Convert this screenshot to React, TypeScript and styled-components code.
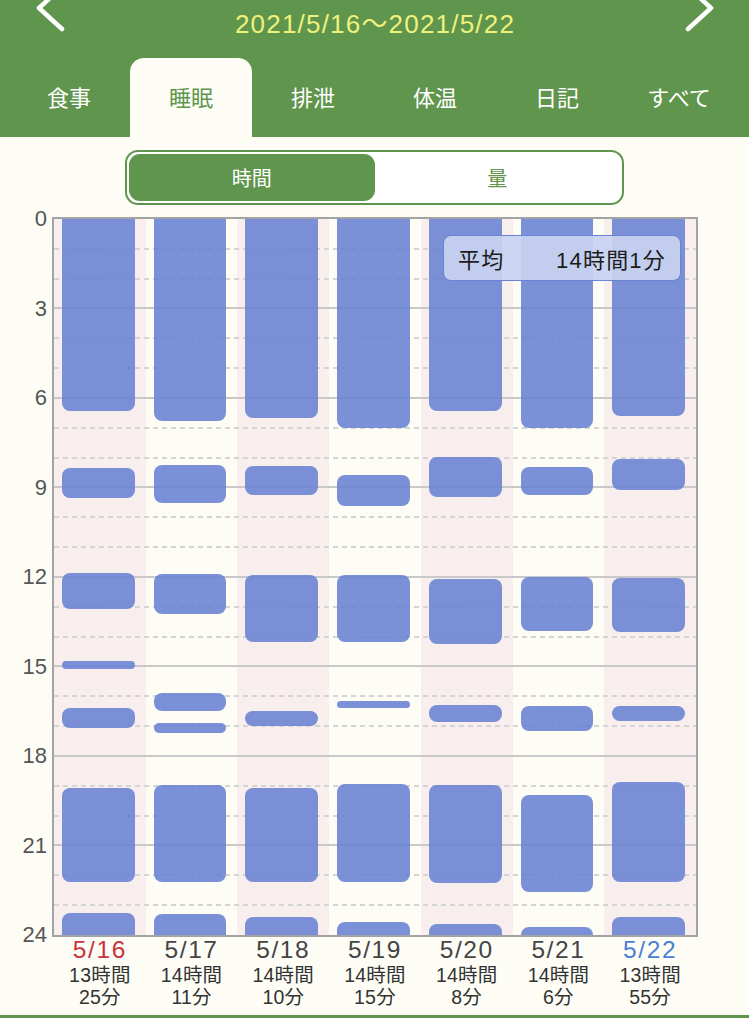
import React from "react";
import styled, { createGlobalStyle } from "styled-components";

const GREEN = "#5f954c";
const PX_PER_HOUR = 716 / 24;
const NUM_FONT = `"Liberation Sans", "Noto Sans CJK JP", sans-serif`;

const GlobalStyle = createGlobalStyle`
  html, body { margin: 0; padding: 0; background: #fdfdf6; }
  body { font-family: "Noto Sans CJK JP", "Noto Sans", sans-serif; }
  * { box-sizing: border-box; }
`;

const Page = styled.div`
  width: 749px;
  display: flex;
  flex-direction: column;
  background: #fdfdf6;
`;

const Header = styled.header`
  background: ${GREEN};
  display: flex;
  flex-direction: column;
`;

const TopRow = styled.div`
  height: 58px;
  display: flex;
  justify-content: space-between;
  align-items: flex-start;
  padding: 0 33px 0 34px;
`;

const DateRange = styled.div`
  font-family: ${NUM_FONT};
  color: #eef27c;
  font-size: 26px;
  line-height: 48px;
  letter-spacing: 1.2px;
`;

const Chevron = styled.svg`
  width: 32px;
  height: 34px;
  display: block;
`;

const Tabs = styled.nav`
  height: 79px;
  display: flex;
  padding-left: 8px;
`;

const Tab = styled.div<{ $active?: boolean }>`
  width: 122px;
  display: flex;
  align-items: center;
  justify-content: center;
  padding-bottom: 3px;
  font-size: 22px;
  color: ${(p) => (p.$active ? GREEN : "#ffffff")};
  background: ${(p) => (p.$active ? "#fdfdf6" : "transparent")};
  border-radius: 14px 14px 0 0;
`;

const SegmentWrap = styled.div`
  display: flex;
  justify-content: center;
  padding-top: 13px;
`;

const Segment = styled.div`
  width: 499px;
  height: 55px;
  border: 2px solid ${GREEN};
  border-radius: 13px;
  padding: 2px;
  background: #ffffff;
  display: flex;
`;

const SegmentItem = styled.div<{ $active?: boolean }>`
  flex: 1;
  display: flex;
  align-items: center;
  justify-content: center;
  font-size: 20px;
  border-radius: 11px;
  color: ${(p) => (p.$active ? "#ffffff" : GREEN)};
  background: ${(p) => (p.$active ? GREEN : "transparent")};
`;

const Chart = styled.div`
  margin-top: 12px;
  display: grid;
  grid-template-columns: 52px 646px;
`;

const Axis = styled.div`
  height: 720px;
  padding: 2px 5px 2px 0;
  display: flex;
  flex-direction: column;
  justify-content: space-between;
  align-items: flex-end;
`;

const AxisLabel = styled.div`
  height: 0;
  display: flex;
  align-items: center;
  font-family: ${NUM_FONT};
  font-size: 22px;
  color: #555555;
`;

const Plot = styled.div`
  position: relative;
  height: 720px;
  border: 2px solid #a3a3a3;
`;

const Columns = styled.div`
  display: grid;
  grid-template-columns: repeat(7, 1fr);
  height: 100%;
`;

const Column = styled.div<{ $shaded?: boolean }>`
  position: relative;
  overflow: hidden;
  background: ${(p) => (p.$shaded ? "#f8eeee" : "transparent")};
`;

const Grid = styled.div`
  position: absolute;
  inset: 0;
  z-index: 1;
  display: flex;
  flex-direction: column;
  pointer-events: none;
`;

const GridRow = styled.div<{ $line: "none" | "solid" | "dashed" }>`
  flex: 1;
  position: relative;
  &::before {
    content: "";
    display: ${(p) => (p.$line === "none" ? "none" : "block")};
    position: absolute;
    left: 0;
    right: 0;
    top: -1px;
    height: 2px;
    background: ${(p) =>
      p.$line === "solid"
        ? "#c9c9c9"
        : "repeating-linear-gradient(to right, #d4d4d4 0 5px, transparent 5px 9px)"};
  }
`;

const Bar = styled.div`
  position: absolute;
  left: 8px;
  right: 11px;
  z-index: 2;
  border-radius: 8px;
  background: rgba(104, 130, 211, 0.88);
`;

const Badge = styled.div`
  position: absolute;
  top: 16px;
  right: 15px;
  z-index: 3;
  width: 238px;
  height: 46px;
  padding: 0 14px 0 14px;
  display: flex;
  align-items: center;
  justify-content: space-between;
  border: 1.5px solid #6a83d6;
  border-radius: 8px;
  background: rgba(200, 211, 241, 0.93);
  font-family: ${NUM_FONT};
  font-size: 22px;
  letter-spacing: 1.2px;
  color: #1c1c1c;
`;

const XLabels = styled.div`
  margin-left: 54px;
  width: 642px;
  display: grid;
  grid-template-columns: repeat(7, 1fr);
`;

const XLabel = styled.div`
  display: flex;
  flex-direction: column;
  align-items: center;
`;

const DayText = styled.div<{ $color: string }>`
  font-family: ${NUM_FONT};
  font-size: 24.5px;
  line-height: 26px;
  letter-spacing: 1.6px;
  color: ${(p) => p.$color};
`;

const DurationBox = styled.div`
  margin-top: 1px;
  display: flex;
  flex-direction: column;
  align-items: center;
`;

const DurationLine = styled.div`
  font-family: ${NUM_FONT};
  font-size: 19.5px;
  line-height: 22px;
  letter-spacing: 0.2px;
  color: #333333;
`;

const FooterLine = styled.div`
  margin-top: 7px;
  height: 3px;
  background: ${GREEN};
`;

type Day = {
  label: string;
  color: string;
  h: string;
  m: string;
  bars: [number, number][];
};

const days: Day[] = [
  {
    label: "5/16", color: "#c9323e", h: "13時間", m: "25分",
    bars: [[0, 6.43], [8.34, 9.34], [11.88, 13.08], [14.82, 15.07], [16.4, 17.07], [19.06, 22.21], [23.27, 24]],
  },
  {
    label: "5/17", color: "#444444", h: "14時間", m: "11分",
    bars: [[0, 6.76], [8.25, 9.51], [11.91, 13.23], [15.9, 16.48], [16.89, 17.23], [18.97, 22.21], [23.3, 24]],
  },
  {
    label: "5/18", color: "#444444", h: "14時間", m: "10分",
    bars: [[0, 6.67], [8.27, 9.25], [11.94, 14.19], [16.48, 16.98], [19.06, 22.21], [23.39, 24]],
  },
  {
    label: "5/19", color: "#444444", h: "14時間", m: "15分",
    bars: [[0, 7.0], [8.59, 9.62], [11.93, 14.19], [16.15, 16.4], [18.94, 22.21], [23.55, 24]],
  },
  {
    label: "5/20", color: "#444444", h: "14時間", m: "8分",
    bars: [[0, 6.43], [7.98, 9.31], [12.08, 14.24], [16.28, 16.87], [18.97, 22.27], [23.63, 24]],
  },
  {
    label: "5/21", color: "#444444", h: "14時間", m: "6分",
    bars: [[0, 7.0], [8.31, 9.25], [11.99, 13.8], [16.31, 17.15], [19.31, 22.55], [23.72, 24]],
  },
  {
    label: "5/22", color: "#4a80d6", h: "13時間", m: "55分",
    bars: [[0, 6.59], [8.04, 9.08], [12.02, 13.85], [16.31, 16.82], [18.86, 22.21], [23.39, 24]],
  },
];

const tabs = ["食事", "睡眠", "排泄", "体温", "日記", "すべて"];
const ticks = [0, 3, 6, 9, 12, 15, 18, 21, 24];

function barStyle(start: number, end: number): React.CSSProperties {
  const top = start === 0 ? -12 : start * PX_PER_HOUR;
  const bottom = end >= 24 ? 24 * PX_PER_HOUR + 12 : end * PX_PER_HOUR;
  return { top, height: bottom - top };
}

export default function App() {
  return (
    <Page>
      <GlobalStyle />
      <Header>
        <TopRow>
          <Chevron viewBox="0 0 32 34">
            <path d="M28 -13 L5 8 L28 29" fill="none" stroke="#ffffff" strokeWidth="4.5" strokeLinecap="round" strokeLinejoin="round" />
          </Chevron>
          <DateRange>2021/5/16〜2021/5/22</DateRange>
          <Chevron viewBox="0 0 32 34">
            <path d="M4 -13 L27 8 L4 29" fill="none" stroke="#ffffff" strokeWidth="4.5" strokeLinecap="round" strokeLinejoin="round" />
          </Chevron>
        </TopRow>
        <Tabs>
          {tabs.map((t) => (
            <Tab key={t} $active={t === "睡眠"}>
              {t}
            </Tab>
          ))}
        </Tabs>
      </Header>

      <SegmentWrap>
        <Segment>
          <SegmentItem $active>時間</SegmentItem>
          <SegmentItem>量</SegmentItem>
        </Segment>
      </SegmentWrap>

      <Chart>
        <Axis>
          {ticks.map((t) => (
            <AxisLabel key={t}>{t}</AxisLabel>
          ))}
        </Axis>
        <Plot>
          <Columns>
            {days.map((d, i) => (
              <Column key={d.label} $shaded={i % 2 === 0}>
                {d.bars.map(([s, e], j) => (
                  <Bar key={j} style={barStyle(s, e)} />
                ))}
              </Column>
            ))}
          </Columns>
          <Grid>
            {Array.from({ length: 24 }, (_, i) => (
              <GridRow key={i} $line={i === 0 ? "none" : i % 3 === 0 ? "solid" : "dashed"} />
            ))}
          </Grid>
          <Badge>
            <span>平均</span>
            <span>14時間1分</span>
          </Badge>
        </Plot>
      </Chart>

      <XLabels>
        {days.map((d) => (
          <XLabel key={d.label}>
            <DayText $color={d.color}>{d.label}</DayText>
            <DurationBox>
              <DurationLine>{d.h}</DurationLine>
              <DurationLine>{d.m}</DurationLine>
            </DurationBox>
          </XLabel>
        ))}
      </XLabels>
      <FooterLine />
    </Page>
  );
}
